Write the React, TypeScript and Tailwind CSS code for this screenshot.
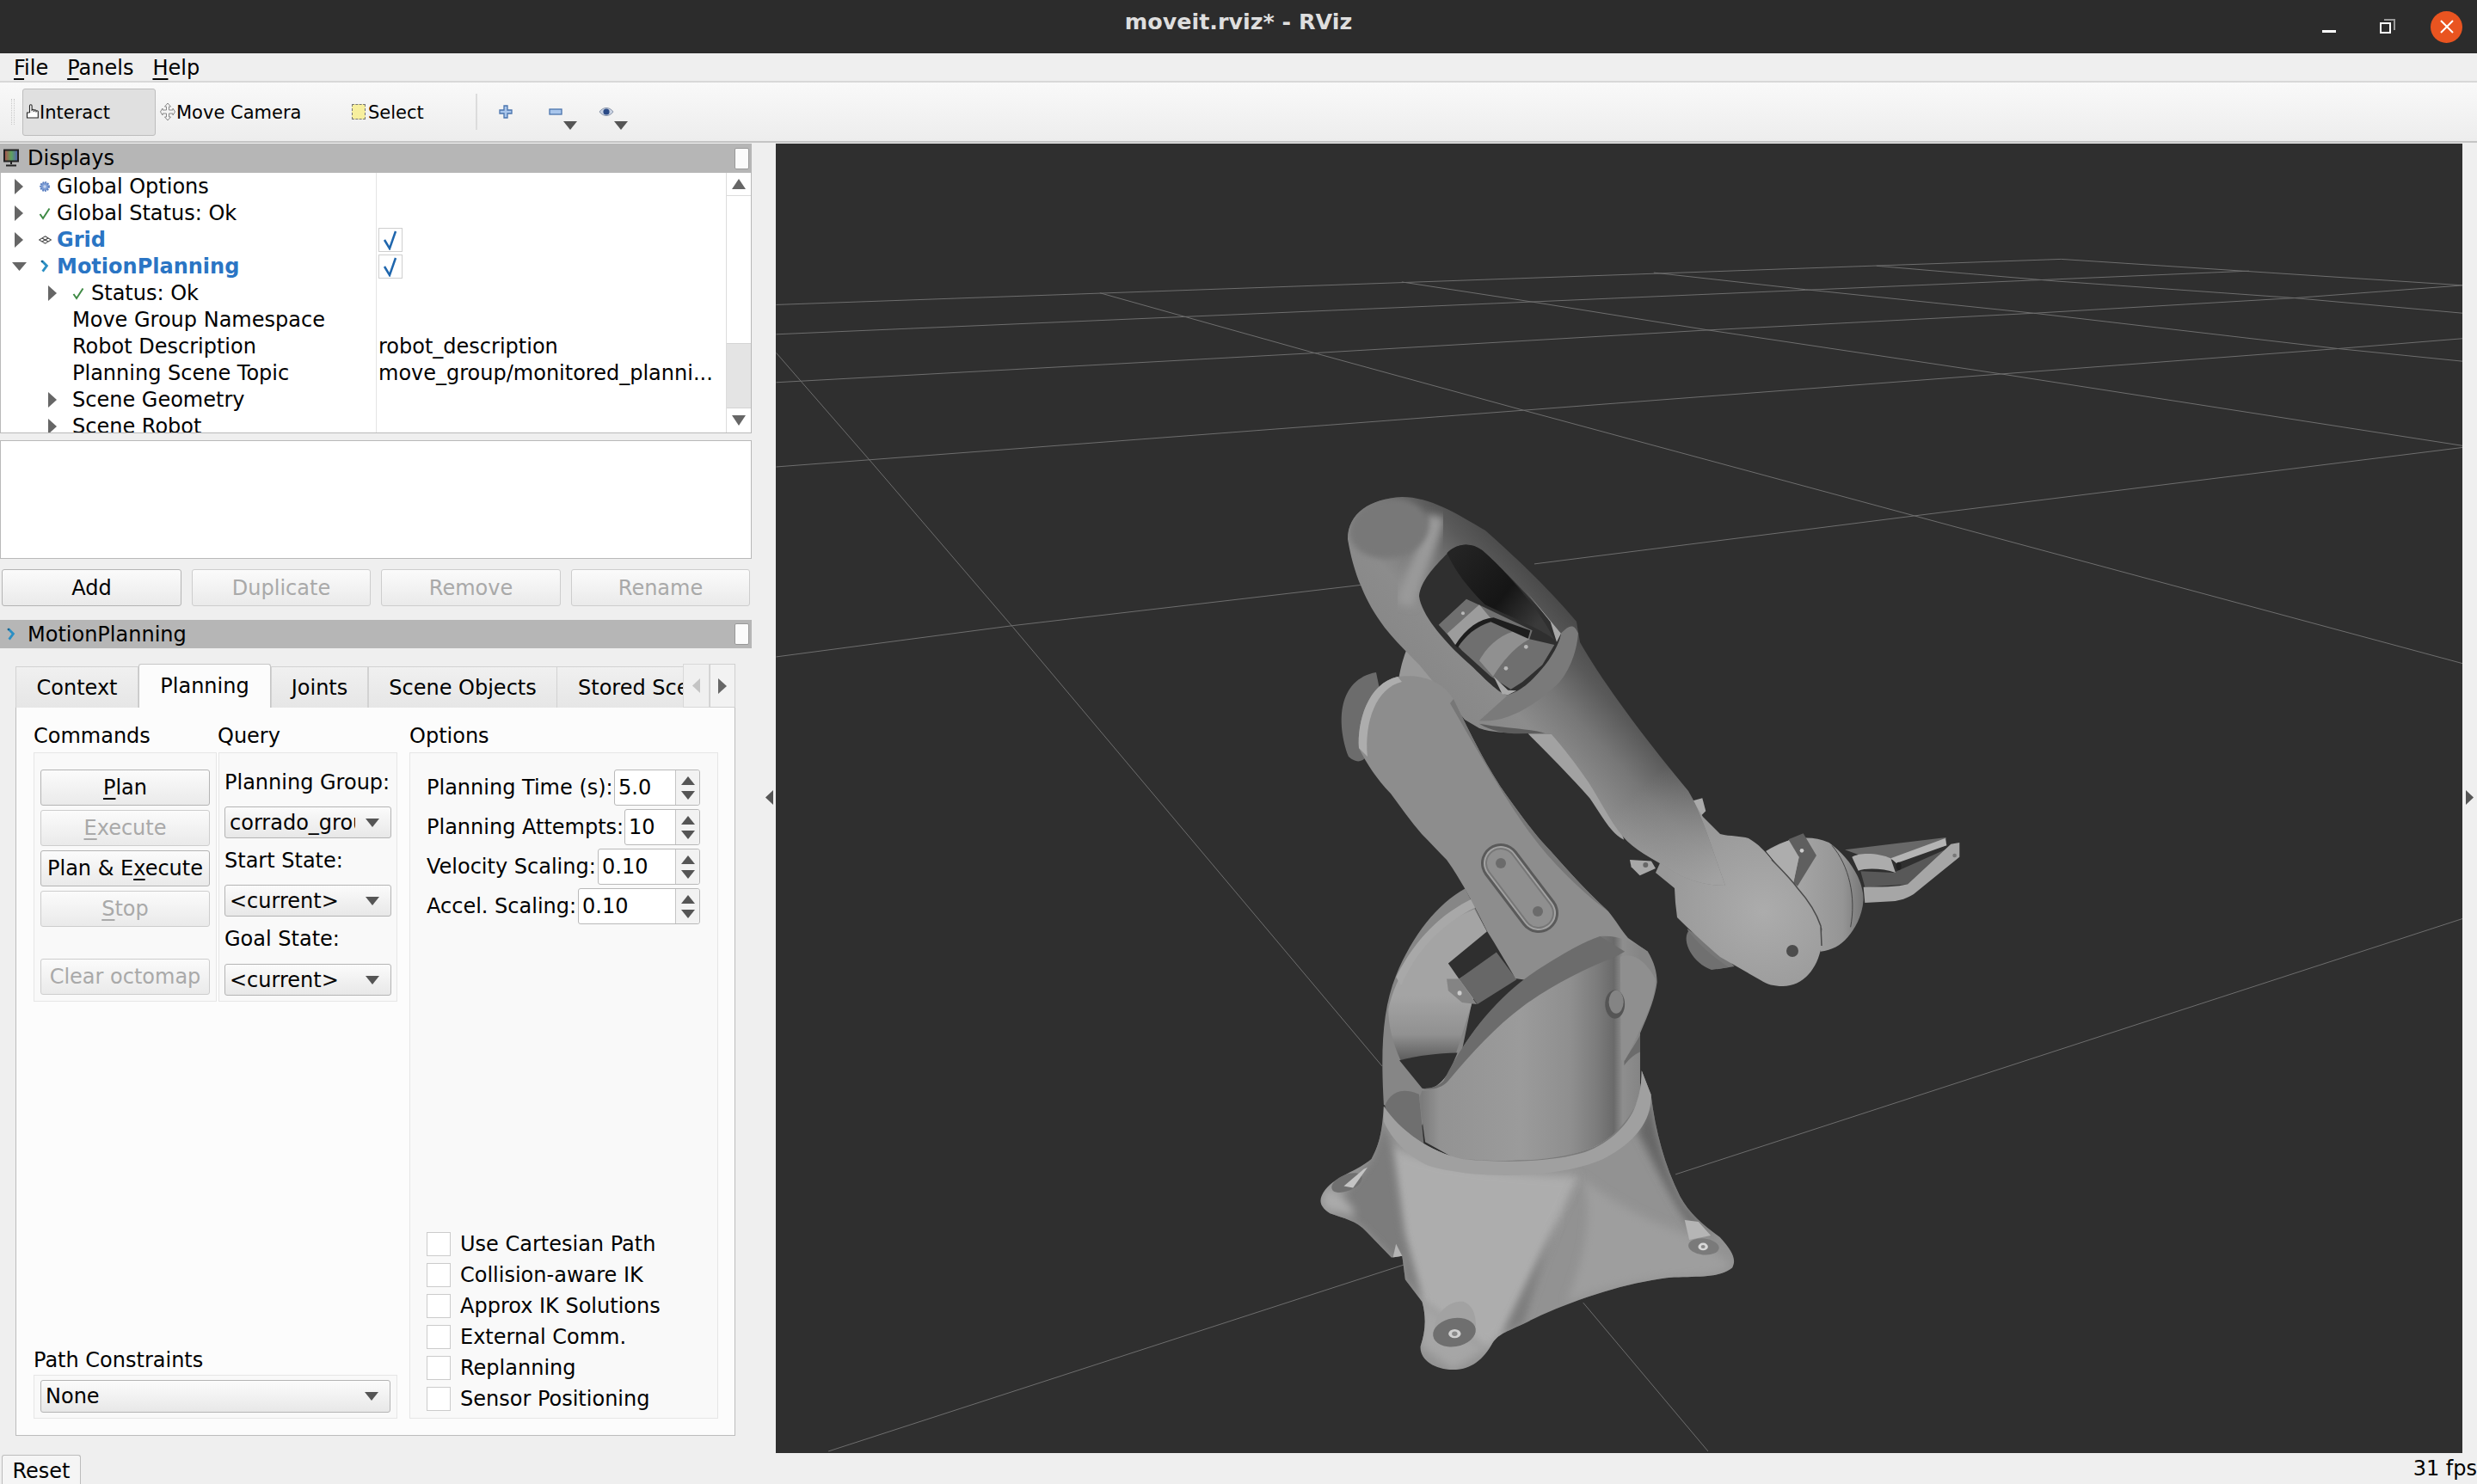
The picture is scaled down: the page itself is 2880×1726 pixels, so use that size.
import React from "react";

const FONT = "font-['DejaVu_Sans',sans-serif]";

function RightArrow() {
  return (
    <svg width="10" height="18" viewBox="0 0 10 18" className="block">
      <path d="M0 0L10 9L0 18Z" fill="#666" />
    </svg>
  );
}

function DownArrow() {
  return (
    <svg width="17" height="10" viewBox="0 0 17 10" className="block">
      <path d="M0 0H17L8.5 10Z" fill="#666" />
    </svg>
  );
}

function ComboArrow() {
  return (
    <svg width="16" height="10" viewBox="0 0 16 10" className="block shrink-0">
      <path d="M0 0H16L8 10Z" fill="#555" />
    </svg>
  );
}

function Check() {
  return (
    <svg width="16" height="16" viewBox="0 0 16 16" className="block">
      <path d="M2.5 9L6 14L13.5 2.5" fill="none" stroke="#3f8a45" strokeWidth="2" />
    </svg>
  );
}

function GearIcon() {
  return (
    <svg width="14" height="14" viewBox="0 0 16 16" className="block">
      <circle cx="8" cy="8" r="5.5" fill="#7f9fd6" stroke="#5b7fc0" strokeWidth="2.5" strokeDasharray="2 1.2" />
      <circle cx="8" cy="8" r="2" fill="#c8d6ef" />
    </svg>
  );
}

function GridIcon() {
  return (
    <svg width="15" height="10" viewBox="0 0 16 10" className="block">
      <path d="M8 .5L15.5 5L8 9.5L.5 5ZM4.2 2.8L11.8 7.2M11.8 2.8L4.2 7.2" fill="#fff" stroke="#444" strokeWidth="1.1" />
    </svg>
  );
}

function MotionIcon() {
  return (
    <svg width="12" height="16" viewBox="0 0 14 20" className="block">
      <path d="M3 2L10 9L4 17" fill="none" stroke="#2b8fc4" strokeWidth="3.5" />
      <circle cx="3" cy="2.5" r="1.5" fill="#16618f" />
    </svg>
  );
}

function MonitorIcon() {
  return (
    <svg width="20" height="22" viewBox="0 0 20 22" className="block">
      <defs>
        <linearGradient id="monitorFill" x1="0" x2="1" y1="0" y2="0">
          <stop offset="0" stopColor="#b24d4d" />
          <stop offset="0.5" stopColor="#5da35d" />
          <stop offset="1" stopColor="#5560b5" />
        </linearGradient>
      </defs>
      <rect x="2" y="1.5" width="16" height="13" fill="url(#monitorFill)" stroke="#222" strokeWidth="2" />
      <path d="M10 15V18M4 19.5H16" stroke="#222" strokeWidth="2" />
    </svg>
  );
}

function TreeRow({
  indent = 0,
  arrow,
  icon,
  label,
  value,
  blue,
  checked,
  textLeft,
}: {
  indent?: number;
  arrow?: "right" | "down";
  icon?: React.ReactNode;
  label: string;
  value?: string;
  blue?: boolean;
  checked?: boolean;
  textLeft: number;
}) {
  return (
    <div className="flex h-[31px] shrink-0 items-center">
      <div className="flex h-full w-[437px] shrink-0 items-center border-r border-[#e4e4e4]">
        <div className="relative flex h-full w-full items-center">
          <div className="flex w-[42px] shrink-0 items-center justify-center" style={{ marginLeft: indent }}>
            {arrow === "right" && <RightArrow />}
            {arrow === "down" && <DownArrow />}
          </div>
          {icon && <div className="flex w-[18px] shrink-0 items-center justify-center">{icon}</div>}
          <span
            className={blue ? "whitespace-nowrap font-bold text-[#2a75c4]" : "whitespace-nowrap text-black"}
            style={{ marginLeft: textLeft }}
          >
            {label}
          </span>
        </div>
      </div>
      <div className="flex h-full flex-1 items-center pl-[2px] whitespace-nowrap text-black">
        {checked ? (
          <div className="flex h-[28px] w-[28px] items-center justify-center border border-[#cfcfcf] bg-white">
            <svg width="20" height="24" viewBox="0 0 20 24">
              <path d="M3 12L9 22L16 2" fill="none" stroke="#1f66ad" strokeWidth="2.5" />
            </svg>
          </div>
        ) : (
          value
        )}
      </div>
    </div>
  );
}

function DockHeader({ icon, title, height }: { icon: React.ReactNode; title: string; height: string }) {
  return (
    <div className={`flex ${height} items-center justify-between bg-[#b6b6b6] pl-[3px] pr-[3px]`}>
      <div className="flex items-center">
        <div className="flex w-[20px] justify-center">{icon}</div>
        <span className="ml-[9px] text-black">{title}</span>
      </div>
      <div className="h-[25px] w-[17px] rounded-[2px] border border-[#999] bg-[#fbfbfb]" />
    </div>
  );
}

function ActionButton({ label, disabled, className }: { label: React.ReactNode; disabled?: boolean; className: string }) {
  return (
    <div
      className={`flex items-center justify-center whitespace-nowrap rounded-[3px] border bg-gradient-to-b from-[#fbfbfb] to-[#eaeaea] ${
        disabled ? "border-[#cdcdcd] text-[#a9a9a9]" : "border-[#b4b4b4] text-black"
      } ${className}`}
    >
      {label}
    </div>
  );
}

function Combo({ text, className, clip }: { text: string; className: string; clip?: boolean }) {
  return (
    <div
      className={`flex items-center rounded-[3px] border border-[#b4b4b4] bg-gradient-to-b from-[#fbfbfb] to-[#e8e8e8] pl-[5px] pr-[13px] ${className}`}
    >
      <div className="min-w-0 flex-1">
        <div className={`overflow-hidden whitespace-nowrap leading-[32px] text-black ${clip ? "w-[146px]" : ""}`}>{text}</div>
      </div>
      <ComboArrow />
    </div>
  );
}

function Spin({ label, value, width }: { label: string; value: string; width: string }) {
  return (
    <div className="flex h-[42px] items-center">
      <span className="min-w-0 flex-1 whitespace-nowrap text-black">{label}</span>
      <div className={`flex h-[42px] ${width} shrink-0 rounded-[3px] border border-[#b9b9b9] bg-white`}>
        <div className="flex-1 pl-[4px] leading-[40px] text-black">{value}</div>
        <div className="flex w-[28px] flex-col items-center justify-center gap-[7px] rounded-r-[3px] border-l border-[#c4c4c4] bg-[#f2f2f2]">
          <svg width="16" height="10" viewBox="0 0 16 10" className="block">
            <path d="M8 0L16 10H0Z" fill="#555" />
          </svg>
          <svg width="16" height="10" viewBox="0 0 16 10" className="block">
            <path d="M0 0H16L8 10Z" fill="#555" />
          </svg>
        </div>
      </div>
    </div>
  );
}

function CheckRow({ label }: { label: string }) {
  return (
    <div className="flex h-[28px] items-center">
      <div className="h-[28px] w-[28px] shrink-0 border border-[#cbcbcb] bg-white" />
      <span className="ml-[11px] whitespace-nowrap text-black">{label}</span>
    </div>
  );
}

function Tab({ label, active, width }: { label: string; active?: boolean; width: string }) {
  return (
    <div
      className={`flex shrink-0 items-center justify-center border border-b-0 ${width} ${
        active
          ? "h-[51px] rounded-t-[3px] border-[#c6c6c6] bg-[#fcfcfc]"
          : "h-[48px] border-[#d2d2d2] bg-gradient-to-b from-[#f0f0f0] to-[#e6e6e6]"
      } text-black`}
    >
      {label}
    </div>
  );
}

function GridLines() {
  const lines = [
    "2,198 1185,144 1555,175",
    "2,233 1358,158",
    "2,290 500,255 860,228 1160,208 1400,190 1555,175",
    "2,390 690,323 1130,280 1440,250 1555,238",
    "2,615 220,578 540,530",
    "700,505 1050,448 1555,367",
    "50,1556 580,1335",
    "830,1228 1555,925",
    "2,255 90,385 220,580 560,1100",
    "745,1380 860,1556",
    "300,184 500,256 690,323 1050,448 1555,623",
    "578,171 700,195 860,228 1130,280 1555,365",
    "810,160 950,180 1160,208 1440,250 1555,265",
    "1015,152 1180,170 1400,190 1555,208",
  ];
  return (
    <g transform="translate(900 160) scale(1.2628 0.982)">
      {lines.map((l) => (
        <polyline key={l} points={l} fill="none" stroke="#6e6e6e" strokeWidth="1" vectorEffect="non-scaling-stroke" />
      ))}
    </g>
  );
}

const SKIRT =
  "M305,725 C300,790 295,830 265,880 C220,915 150,930 115,970 C90,1000 95,1020 130,1040 C175,1055 215,1060 250,1095 L330,1170 L365,1165 L375,1235 L430,1300 C445,1350 440,1390 425,1430 C420,1470 470,1500 530,1500 C590,1500 630,1470 660,1420 C680,1395 700,1390 760,1365 C900,1300 1100,1240 1250,1228 C1330,1225 1400,1230 1440,1200 C1455,1175 1440,1150 1400,1110 C1340,1070 1300,1040 1270,990 C1220,900 1190,800 1175,690 L1145,620 C1145,720 1100,790 1000,840 C880,890 700,890 560,880 C460,860 360,800 305,725 Z";

const ARM =
  "M1567,627 C1567,597 1593,580 1630,578 C1663,578 1693,597 1727,617 C1753,640 1797,680 1833,723 L1837,747 C1863,793 1913,860 1963,920 C1978,945 1990,985 2006,1030 C1985,1030 1960,1024 1940,1010 C1920,998 1900,988 1887,973 C1872,955 1860,930 1847,910 C1832,888 1818,870 1803,853 L1767,853 C1750,852 1735,852 1720,847 L1703,837 C1685,815 1668,795 1650,773 C1635,758 1622,745 1610,730 C1597,712 1590,700 1583,683 C1575,665 1570,645 1567,627 Z";

function Robot() {
  return (
    <g>
      <defs>
        <linearGradient id="armTube" gradientUnits="userSpaceOnUse" x1="1640" y1="880" x2="1860" y2="680">
          <stop offset="0" stopColor="#6f6f6f" />
          <stop offset="0.25" stopColor="#888888" />
          <stop offset="0.42" stopColor="#8c8c8c" />
          <stop offset="0.58" stopColor="#777777" />
          <stop offset="0.72" stopColor="#5a5a5a" />
          <stop offset="0.88" stopColor="#444444" />
          <stop offset="1" stopColor="#353535" />
        </linearGradient>
        <linearGradient id="armFade" gradientUnits="userSpaceOnUse" x1="1905" y1="920" x2="2000" y2="1020">
          <stop offset="0" stopColor="#a2a2a2" stopOpacity="0" />
          <stop offset="1" stopColor="#a2a2a2" stopOpacity="1" />
        </linearGradient>
        <radialGradient id="elbowFill" gradientUnits="userSpaceOnUse" cx="2050" cy="1060" r="120">
          <stop offset="0" stopColor="#acacac" />
          <stop offset="1" stopColor="#989898" />
        </radialGradient>
        <linearGradient id="shellFill" gradientUnits="userSpaceOnUse" x1="430" y1="0" x2="1140" y2="0">
          <stop offset="0" stopColor="#7c7c7c" />
          <stop offset="0.08" stopColor="#939393" />
          <stop offset="0.45" stopColor="#9b9b9b" />
          <stop offset="0.68" stopColor="#8f8f8f" />
          <stop offset="0.8" stopColor="#7c7c7c" />
          <stop offset="0.88" stopColor="#6a6a6a" />
          <stop offset="0.92" stopColor="#8e8e8e" />
          <stop offset="1" stopColor="#858585" />
        </linearGradient>
        <linearGradient id="innerWall" gradientUnits="userSpaceOnUse" x1="0" y1="400" x2="0" y2="590">
          <stop offset="0" stopColor="#a4a4a4" />
          <stop offset="0.6" stopColor="#919191" />
          <stop offset="1" stopColor="#5c5c5c" />
        </linearGradient>
        <linearGradient id="windowDark" gradientUnits="userSpaceOnUse" x1="500" y1="260" x2="800" y2="500">
          <stop offset="0" stopColor="#242424" />
          <stop offset="0.6" stopColor="#151515" />
          <stop offset="1" stopColor="#3a3a3a" />
        </linearGradient>
        <linearGradient id="wristFill" gradientUnits="userSpaceOnUse" x1="560" y1="0" x2="800" y2="0">
          <stop offset="0" stopColor="#a6a6a6" />
          <stop offset="0.7" stopColor="#959595" />
          <stop offset="1" stopColor="#777" />
        </linearGradient>
        <filter id="soft" x="-20%" y="-20%" width="140%" height="140%">
          <feGaussianBlur stdDeviation="14" />
        </filter>
        <filter id="softArm" x="-30%" y="-30%" width="160%" height="160%">
          <feGaussianBlur stdDeviation="9" />
        </filter>
        <clipPath id="skirtClip">
          <path d={SKIRT} />
        </clipPath>
        <clipPath id="armClip">
          <path d={ARM} />
        </clipPath>
      </defs>

      {/* screw tabs and crescent behind the forearm */}
      <g transform="translate(1520 560) scale(0.3333)">
        <path d="M320,680 C330,630 340,600 350,580 L400,640 L470,700 L400,700 Z" fill="#999" />
        <path d="M770,880 L860,880 C940,950 1040,1060 1105,1250 C1060,1230 1030,1170 985,1105 C920,1030 840,950 770,880 Z" fill="#a2a2a2" />
        <path d="M1340,1115 L1378,1105 L1390,1150 L1370,1170 Z" fill="#aaa" />
        <path d="M1125,1320 L1200,1325 L1215,1350 L1160,1375 L1130,1345 Z" fill="#a8a8a8" />
        <circle cx="1180" cy="1338" r="9" fill="#666" />
      </g>

      {/* wrist and gripper */}
      <g transform="translate(1900 900) scale(0.3333)">
        <path d="M185,540 C210,600 240,660 290,682 L350,672 L300,620 Z" fill="#777" />
        <path d="M735,265 L1088,222 L1090,250 L900,300 L790,285 Z" fill="#686868" />
        <path d="M790,340 L905,345 L1118,250 L1120,290 L965,385 L805,395 Z" fill="#585858" />
        <path d="M800,395 C860,395 920,395 955,385 L1105,245 L1135,240 L1135,290 L975,420 C950,435 930,442 900,445 L805,450 Z" fill="#a6a6a6" />
        <path d="M760,290 C790,272 860,278 895,295 L912,345 C870,330 810,328 782,338 Z" fill="#acacac" />
        <path d="M895,295 L1085,225 L1090,250 L915,312 Z" fill="#b4b4b4" />
        <ellipse cx="923" cy="322" rx="9" ry="14" fill="#222" />
        <circle cx="1118" cy="285" r="7" fill="#777" />
        <path d="M460,270 C520,230 600,205 680,240 C750,290 800,370 800,440 C795,500 770,540 745,570 C720,600 690,615 650,620 L655,540 L560,395 Z" fill="url(#wristFill)" />
        <path d="M540,228 L590,208 L636,285 L570,392 L555,380 L575,290 L540,265 Z" fill="#5f5f5f" />
        <path d="M460,270 L540,232 L575,290 L556,380 Z" fill="#adadad" />
        <circle cx="585" cy="268" r="7" fill="#ccc" />
        <path d="M690,250 C750,320 775,430 755,535" fill="none" stroke="#444" strokeWidth="3" />
      </g>

      {/* forearm and elbow */}
      <path d="M1963,1083 C1955,1095 1968,1120 1990,1128 L2010,1125 C1990,1112 1975,1098 1963,1083 Z" fill="#707070" />
      <path d="M1947,1033 L1925,1015 L1965,925 L1980,950 L2000,970 C2012,973 2024,972 2033,975 C2045,982 2052,990 2060,1000 C2072,1012 2082,1022 2090,1033 C2105,1050 2112,1062 2117,1077 L2118,1100 C2115,1115 2110,1125 2103,1133 C2095,1142 2084,1147 2073,1147 C2062,1147 2055,1145 2047,1140 L2000,1113 C1985,1100 1965,1082 1950,1067 L1948,1050 Z" fill="url(#elbowFill)" />
      <path d="M2060,1000 C2072,1012 2082,1022 2090,1033 C2105,1050 2112,1062 2117,1077 L2118,1100" fill="none" stroke="#4a4a4a" strokeWidth="1.5" />
      <path d={ARM} fill="url(#armTube)" />
      <path d={ARM} fill="url(#armFade)" />
      <circle cx="2084" cy="1106" r="7" fill="#4c4c4c" />
      <g clipPath="url(#armClip)">
        <g transform="translate(1520 560) scale(0.3333)">
          <path d="M450,120 C430,220 370,320 340,430" fill="none" stroke="#9a9a9a" strokeWidth="60" filter="url(#soft)" />
          <ellipse cx="285" cy="165" rx="140" ry="102" transform="rotate(-10 285 165)" fill="#787878" filter="url(#softArm)" />
        </g>
      </g>
      <g transform="translate(1520 560) scale(0.3333)">
        <path d="M885,530 C880,560 860,600 830,640 C790,690 750,730 700,745 L600,835 C700,845 810,770 880,700 C920,650 940,590 945,530 C930,495 915,500 885,530 Z" fill="#7a7a7a" />
        <path d="M600,845 C680,860 760,860 830,878 L740,880 C690,880 640,870 600,845 Z" fill="#5c5c5c" />
        <path d="M390,400 C395,350 440,300 490,250 C520,215 570,210 610,240 C680,300 800,430 885,530 C880,560 860,600 830,640 C790,690 750,730 700,745 C680,745 640,710 580,650 C510,590 400,480 390,400 Z" fill="#2f2f2f" />
        <path d="M487,250 C520,215 570,210 610,240 C680,300 800,430 862,552 C810,510 700,470 620,430 C560,370 520,320 487,250 Z" fill="url(#windowDark)" />
        <path d="M458,500 L555,410 L620,440 L785,520 L775,550 L862,570 L820,640 L750,700 L710,725 L640,680 L540,590 Z" fill="#6f6f6f" />
        <path d="M600,625 C630,570 680,530 735,520 L775,550 C720,580 680,630 648,680 Z" fill="#909090" />
        <path d="M488,530 L600,430 L640,478 C590,490 550,530 520,575 Z" fill="#9c9c9c" />
        <path d="M515,572 C555,510 600,480 650,475 L778,520 L770,548 L640,490 C590,505 550,540 525,580 Z" fill="#1d1d1d" />
        <path d="M650,680 L700,728 L730,730 L700,745 L680,742 Z" fill="#aaa" />
        <path d="M760,380 L885,530 L870,560 L848,490 Z" fill="#a8a8a8" />
        <circle cx="543" cy="460" r="6" fill="#b9b9b9" />
        <circle cx="763" cy="577" r="7" fill="#b9b9b9" />
        <circle cx="693" cy="652" r="7" fill="#b9b9b9" />
      </g>

      {/* back of the yoke, servo, then upper link */}
      <g transform="translate(1500 1000) scale(0.357 0.3954)">
        <path d="M305,720 C295,560 300,440 345,340 C400,220 480,130 570,85 L640,210 L560,560 L480,680 L420,800 Z" fill="#868686" />
        <path d="M320,440 C340,350 420,210 600,145 L640,210 L600,400 L540,570 L360,590 C335,540 320,490 320,440 Z" fill="url(#innerWall)" />
        <path d="M345,345 C410,230 490,160 598,112 L605,140 C490,190 410,270 362,370 Z" fill="#a8a8a8" />
        <path d="M356,590 C420,575 480,570 545,568 L520,620 C500,650 470,680 430,672 Z" fill="#2f2f2f" />
        <path d="M515,305 L640,212 L680,280 L550,350 Z" fill="#2f2f2f" />
        <path d="M550,350 L672,272 L738,352 L610,425 Z" fill="#676767" />
        <path d="M510,350 L550,350 L608,425 L560,420 L515,385 Z" fill="#848484" />
        <circle cx="552" cy="392" r="7" fill="#ccc" />
      </g>

      <path d="M1600,782 C1556,790 1553,840 1568,880 C1590,900 1600,860 1610,830 Z" fill="#6c6c6c" />
      <path d="M1580,870 C1578,840 1590,795 1625,787 C1650,784 1675,790 1690,813 C1710,855 1730,895 1753,927 C1770,950 1785,972 1803,990 C1825,1015 1848,1040 1870,1060 C1880,1072 1885,1082 1893,1091 L1916,1107 L1900,1160 L1762,1138 C1750,1118 1740,1100 1729,1083 C1715,1055 1700,1025 1682,1000 C1672,990 1663,980 1653,970 C1640,955 1628,938 1617,923 C1600,905 1590,890 1580,870 Z" fill="#8d8d8d" />
      <path d="M1580,870 C1578,840 1590,795 1625,787 L1630,793 C1600,800 1586,840 1590,880 Z" fill="#adadad" />
      <path d="M1690,813 C1710,855 1730,895 1753,927 C1770,950 1785,972 1803,990 C1825,1015 1848,1040 1870,1060 C1845,1042 1820,1018 1798,993 C1775,966 1750,930 1686,818 Z" fill="#777" />
      <line x1="1745" y1="1004" x2="1789" y2="1062" stroke="#5a5a5a" strokeWidth="46" strokeLinecap="round" />
      <line x1="1745" y1="1004" x2="1789" y2="1062" stroke="#a2a2a2" strokeWidth="40" strokeLinecap="round" />
      <line x1="1745" y1="1004" x2="1789" y2="1062" stroke="#777" strokeWidth="36" strokeLinecap="round" />
      <line x1="1745" y1="1004" x2="1789" y2="1062" stroke="#8f8f8f" strokeWidth="32" strokeLinecap="round" />
      <circle cx="1745" cy="1004" r="6" fill="#6b6b6b" />
      <circle cx="1788" cy="1060" r="6" fill="#6b6b6b" />

      {/* front shell and base */}
      <g transform="translate(1500 1000) scale(0.357 0.3954)">
        <path d="M310,720 C330,680 370,670 420,690 L440,880 C380,860 320,810 305,770 Z" fill="#6f6f6f" />
        <path d="M430,680 C470,680 500,650 520,620 C600,480 700,390 830,310 C900,270 960,240 1010,225 C1060,220 1120,240 1165,270 C1185,300 1195,330 1195,360 C1190,400 1170,450 1140,510 L1140,720 C1100,790 1000,860 900,880 L560,890 L440,830 L420,700 Z" fill="url(#shellFill)" />
        <path d="M500,650 C600,470 720,370 830,310 C900,270 960,240 1010,225 L1090,270 L1060,285 C960,320 850,370 760,430 C670,490 590,570 520,645 C505,665 470,680 440,672 C470,672 490,660 500,650 Z" fill="#6c6c6c" />
        <path d="M1088,592 C1110,560 1125,540 1140,515 L1140,565 C1115,575 1100,590 1088,605 Z" fill="#6b6b6b" />
        <path d="M1075,285 C1120,270 1160,300 1190,350 C1190,400 1170,450 1090,590 L1078,590 Z" fill="#8f8f8f" />
        <ellipse cx="1058" cy="425" rx="32" ry="42" fill="#555" />
        <ellipse cx="1062" cy="418" rx="24" ry="34" fill="#848484" />

        <path d={SKIRT} fill="#929292" />
        <g clipPath="url(#skirtClip)">
          <path d="M330,840 C450,900 700,920 940,930 C880,1050 800,1200 690,1400 L640,1440 L430,1300 L370,1100 Z" fill="#adadad" filter="url(#soft)" />
          <path d="M940,930 C1040,1000 1150,1060 1290,1100 L1440,1190 C1400,1228 1330,1225 1250,1228 C1100,1240 1000,1270 900,1300 C960,1180 1000,1000 940,930 Z" fill="#9e9e9e" filter="url(#soft)" />
          <path d="M760,1365 C800,1240 860,1070 940,930 C880,1050 800,1200 690,1400 Z" fill="#7c7c7c" filter="url(#soft)" />
          <path d="M1175,690 C1190,800 1220,900 1270,990 C1300,1040 1340,1070 1400,1110 L1300,1070 C1240,1000 1180,880 1130,800 Z" fill="#666" filter="url(#soft)" />
          <path d="M305,770 L330,840 L370,1100 L430,1300 L375,1235 L365,1165 L330,1170 L250,1095 C215,1060 175,1055 130,1040 L265,880 Z" fill="#7b7b7b" filter="url(#soft)" />
          <path d="M120,1030 C100,1005 100,985 125,965 C170,985 200,1010 215,1050 C180,1045 150,1040 120,1030 Z" fill="#aaaaaa" filter="url(#soft)" />
          <path d="M430,1300 L640,1440 L530,1500 L425,1430 Z" fill="#a6a6a6" filter="url(#soft)" />
        </g>
        <path d="M305,725 C360,800 460,860 560,880 C700,890 880,890 1000,840 C1100,790 1145,720 1145,620 L1175,690 C1180,760 1130,830 1020,880 C880,935 620,945 450,900 C380,870 330,820 305,770 Z" fill="#a0a0a0" />
        <path d="M560,880 C700,890 880,890 1000,840 C1060,810 1110,760 1130,710 C1110,775 1040,835 960,860 C850,890 700,892 560,880 Z" fill="#7a7a7a" />
        <ellipse cx="185" cy="950" rx="52" ry="24" fill="#707070" transform="rotate(-20 185 950)" />
        <path d="M175,960 L240,910 L252,905 L205,965 Z" fill="#c4c4c4" />
        <path d="M335,1170 L345,1130 L365,1165 Z" fill="#b5b5b5" />
        <path d="M470,1375 C480,1320 530,1295 565,1300 C595,1310 605,1340 605,1370 L540,1420 Z" fill="#a2a2a2" />
        <ellipse cx="535" cy="1390" rx="70" ry="42" fill="#6f6f6f" transform="rotate(-8 535 1390)" />
        <ellipse cx="536" cy="1394" rx="20" ry="13" fill="#d0d0d0" />
        <ellipse cx="536" cy="1394" rx="9" ry="7" fill="#8a8a8a" />
        <path d="M1285,1060 L1330,1065 L1370,1105 L1300,1118 Z" fill="#b5b5b5" />
        <ellipse cx="1347" cy="1138" rx="50" ry="24" fill="#7a7a7a" transform="rotate(5 1347 1138)" />
        <ellipse cx="1345" cy="1138" rx="16" ry="11" fill="#d8d8d8" />
        <ellipse cx="1345" cy="1138" rx="7" ry="5" fill="#8a8a8a" />
      </g>
    </g>
  );
}

export default function App() {
  return (
    <div className={`flex h-[1726px] w-[2880px] flex-col overflow-hidden bg-[#efefef] text-[24px] leading-none ${FONT}`}>
      {/* window title */}
      <div className="flex h-[62px] shrink-0 items-center bg-[#2c2c2c]">
        <div className="flex-1" />
        <div className="mb-[10px] text-[25.4px] font-bold text-[#dedede]">moveit.rviz* - RViz</div>
        <div className="flex flex-1 items-center justify-end">
          <div className="mt-[10px] h-[3px] w-[16px] bg-white" />
          <svg width="18" height="18" viewBox="0 0 18 18" className="ml-[51px] block">
            <path d="M5 1H17V13" fill="none" stroke="#999" strokeWidth="2" />
            <rect x="1" y="5" width="11" height="11" fill="none" stroke="#fff" strokeWidth="2" />
          </svg>
          <div className="ml-[41px] mr-[17px] flex h-[37px] w-[37px] items-center justify-center rounded-full bg-[#e95420]">
            <svg width="16" height="16" viewBox="0 0 16 16" className="block">
              <path d="M1 1L15 15M15 1L1 15" stroke="#fff" strokeWidth="2" />
            </svg>
          </div>
        </div>
      </div>

      {/* menu bar */}
      <div className="flex h-[34px] shrink-0 items-center gap-[22px] border-b-2 border-[#d8d8d8] bg-[#efefef] pl-[16px] pt-[1px] text-black">
        <span><span className="underline decoration-2 underline-offset-4">F</span>ile</span>
        <span><span className="underline decoration-2 underline-offset-4">P</span>anels</span>
        <span><span className="underline decoration-2 underline-offset-4">H</span>elp</span>
      </div>

      {/* toolbar */}
      <div className="flex h-[70px] shrink-0 items-center border-b-2 border-[#c4c4c4] bg-gradient-to-b from-[#f9f9f9] to-[#ededed] pl-[13px] text-[21px] text-black">
        <div className="h-[30px] w-[4px] border-x border-dotted border-[#c8c8c8]" />
        <div className="ml-[9px] flex h-[55px] w-[155px] items-center rounded-[3px] border border-[#bdbdbd] bg-[#e0e0e0] pl-[3px]">
          <svg width="16" height="20" viewBox="0 0 16 20" className="block">
            <path d="M4.5 11V3a1.3 1.3 0 0 1 2.6 0V9M7.1 8.5a1.2 1.2 0 0 1 2.4 0V10M9.5 9a1.2 1.2 0 0 1 2.4 0V10.5M11.9 10a1.2 1.2 0 0 1 2.4 0V17H1.5V11H4.5" fill="#fff" stroke="#222" strokeWidth="1.1" />
          </svg>
          <span className="mt-[2px]">Interact</span>
        </div>
        <svg width="18" height="22" viewBox="0 0 18 22" className="ml-[5px] block">
          <path d="M9 1L12.5 5H10.5V9H15V7L17.5 11L15 15V13H10.5V17H12.5L9 21L5.5 17H7.5V13H3V15L.5 11L3 7V9H7.5V5H5.5Z" fill="#f4f4f4" stroke="#888" strokeWidth="1" />
        </svg>
        <span className="ml-[1px] mt-[2px] w-[204px]">Move Camera</span>
        <div className="h-[18px] w-[16px] border border-dashed border-[#777] bg-[#f7ef9e]" />
        <span className="ml-[3px] mt-[2px]">Select</span>
        <div className="ml-[60px] h-[42px] w-[2px] bg-[#dcdcdc]" />
        <svg width="16" height="16" viewBox="0 0 16 16" className="ml-[25px] block">
          <path d="M6 1H10V6H15V10H10V15H6V10H1V6H6Z" fill="#a9c6ec" stroke="#4a74ad" strokeWidth="1.3" />
        </svg>
        <svg width="16" height="8" viewBox="0 0 16 8" className="ml-[42px] block">
          <rect x="1" y="1" width="14" height="6" fill="#a9c6ec" stroke="#4a74ad" strokeWidth="1.3" />
        </svg>
        <div className="ml-[1px] mt-[32px]"><ComboArrow /></div>
        <svg width="18" height="14" viewBox="0 0 18 14" className="ml-[25px] block">
          <path d="M1 7C5 1 13 1 17 7C13 13 5 13 1 7Z" fill="#c9d2e2" stroke="#8c97ab" strokeWidth="1" />
          <circle cx="9" cy="7" r="3.6" fill="#2a4a86" />
        </svg>
        <div className="ml-[0px] mt-[32px]"><ComboArrow /></div>
      </div>

      <div className="flex min-h-0 flex-1">
        {/* left docks */}
        <div className="flex w-[902px] shrink-0">
          <div className="flex w-[874px] shrink-0 flex-col pt-[1px]">
            <DockHeader height="h-[34px]" title="Displays" icon={<MonitorIcon />} />

            <div className="flex h-[303px] shrink-0 overflow-hidden border border-t-0 border-[#b9b9b9] bg-white">
              <div className="flex min-w-0 flex-1 flex-col">
                <TreeRow arrow="right" icon={<GearIcon />} label="Global Options" textLeft={5} />
                <TreeRow arrow="right" icon={<Check />} label="Global Status: Ok" textLeft={5} />
                <TreeRow arrow="right" icon={<GridIcon />} label="Grid" textLeft={5} blue checked />
                <TreeRow arrow="down" icon={<MotionIcon />} label="MotionPlanning" textLeft={5} blue checked />
                <TreeRow indent={39} arrow="right" icon={<Check />} label="Status: Ok" textLeft={6} />
                <TreeRow indent={0} label="Move Group Namespace" textLeft={41} />
                <TreeRow indent={0} label="Robot Description" value="robot_description" textLeft={41} />
                <TreeRow indent={0} label="Planning Scene Topic" value="move_group/monitored_planni..." textLeft={41} />
                <TreeRow indent={39} arrow="right" label="Scene Geometry" textLeft={2} />
                <TreeRow indent={39} arrow="right" label="Scene Robot" textLeft={2} />
              </div>
              <div className="flex w-[29px] shrink-0 flex-col border-l border-[#dcdcdc] bg-white">
                <div className="flex h-[27px] shrink-0 items-center justify-center border-b border-[#dcdcdc]">
                  <svg width="16" height="12" viewBox="0 0 16 12" className="block">
                    <path d="M8 0L16 12H0Z" fill="#666" />
                  </svg>
                </div>
                <div className="flex-1" />
                <div className="h-[76px] shrink-0 border-y border-[#d4d4d4] bg-[#e4e4e4]" />
                <div className="flex h-[28px] shrink-0 items-center justify-center">
                  <svg width="16" height="12" viewBox="0 0 16 12" className="block">
                    <path d="M0 0H16L8 12Z" fill="#666" />
                  </svg>
                </div>
              </div>
            </div>

            <div className="mt-[8px] h-[138px] shrink-0 border border-[#b9b9b9] bg-white" />

            <div className="mt-[12px] flex h-[43px] shrink-0 gap-[12px] px-[2px]">
              <ActionButton label="Add" className="w-[209px]" />
              <ActionButton label="Duplicate" disabled className="w-[208px]" />
              <ActionButton label="Remove" disabled className="w-[209px]" />
              <ActionButton label="Rename" disabled className="w-[208px]" />
            </div>

            <div className="mt-[16px]">
              <DockHeader height="h-[33px]" title="MotionPlanning" icon={<MotionIcon />} />
            </div>

            {/* tabs */}
            <div className="ml-[18px] mt-[18px] flex h-[51px] w-[837px] shrink-0 items-end">
              <div className="flex min-w-0 flex-1 items-end overflow-hidden">
                <Tab label="Context" width="w-[143px]" />
                <Tab label="Planning" active width="w-[154px]" />
                <Tab label="Joints" width="w-[113px]" />
                <Tab label="Scene Objects" width="w-[220px]" />
                <div className="flex h-[48px] w-[200px] shrink-0 items-center border-t border-[#d2d2d2] bg-gradient-to-b from-[#f0f0f0] to-[#e6e6e6] pl-[24px] text-black">
                  Stored Scenes
                </div>
              </div>
              <div className="flex h-[51px] w-[31px] shrink-0 items-center justify-center border border-[#d8d8d8] bg-[#f0f0f0]">
                <svg width="9" height="17" viewBox="0 0 9 17" className="block">
                  <path d="M9 0V17L0 8.5Z" fill="#c4c4c4" />
                </svg>
              </div>
              <div className="flex h-[51px] w-[30px] shrink-0 items-center justify-center border border-[#d0d0d0] bg-[#f2f2f2]">
                <RightArrow />
              </div>
            </div>

            {/* planning tab */}
            <div className="ml-[18px] flex h-[847px] w-[837px] shrink-0 border border-t-0 border-[#bcbcbc] bg-[#fcfcfc] pb-[19px] pl-[20px] pr-[19px] pt-[17px]">
              <div className="flex w-[423px] shrink-0 flex-col">
                <div className="flex h-[325px] shrink-0 gap-[2px]">
                  <div className="flex w-[213px] flex-col">
                    <div className="h-[35px] shrink-0 leading-[32px] text-black">Commands</div>
                    <div className="flex h-[290px] flex-col border border-[#e6e6e6] bg-[#f9f9f9] px-[7px] pt-[19px]">
                      <ActionButton label={<span><span className="underline underline-offset-4">P</span>lan</span>} className="h-[42px] shrink-0" />
                      <ActionButton label={<span><span className="underline underline-offset-4">E</span>xecute</span>} disabled className="mt-[5px] h-[42px] shrink-0" />
                      <ActionButton label={<span>Plan &amp; E<span className="underline underline-offset-4">x</span>ecute</span>} className="mt-[5px] h-[42px] shrink-0" />
                      <ActionButton label={<span><span className="underline underline-offset-4">S</span>top</span>} disabled className="mt-[5px] h-[42px] shrink-0" />
                      <ActionButton label="Clear octomap" disabled className="mt-[37px] h-[42px] shrink-0" />
                    </div>
                  </div>
                  <div className="flex w-[208px] flex-col">
                    <div className="-ml-[1px] h-[35px] shrink-0 leading-[32px] text-black">Query</div>
                    <div className="flex h-[290px] flex-col border border-[#e6e6e6] bg-[#f9f9f9] px-[6px] pt-[20px] text-black">
                      <div className="h-[42px] shrink-0 leading-[28px]">Planning Group:</div>
                      <Combo text="corrado_group" clip className="h-[37px] shrink-0" />
                      <div className="mt-[14px] h-[40px] shrink-0 leading-[24px]">Start State:</div>
                      <Combo text="<current>" className="h-[37px] shrink-0" />
                      <div className="mt-[14px] h-[41px] shrink-0 leading-[24px]">Goal State:</div>
                      <Combo text="<current>" className="h-[37px] shrink-0" />
                    </div>
                  </div>
                </div>
                <div className="flex-1" />
                <div className="h-[35px] shrink-0 leading-[36px] text-black">Path Constraints</div>
                <div className="h-[51px] shrink-0 border border-[#e6e6e6] bg-[#f9f9f9] px-[7px] pt-[5px]">
                  <Combo text="None" className="h-[38px]" />
                </div>
              </div>
              <div className="ml-[14px] flex w-[359px] shrink-0 flex-col">
                <div className="h-[35px] shrink-0 leading-[32px] text-black">Options</div>
                <div className="flex flex-1 flex-col border border-[#e6e6e6] bg-[#f9f9f9] pb-[8px] pl-[19px] pr-[20px] pt-[19px]">
                  <div className="flex flex-col gap-[4px]">
                    <Spin label="Planning Time (s):" value="5.0" width="w-[100px]" />
                    <Spin label="Planning Attempts:" value="10" width="w-[88px]" />
                    <Spin label="Velocity Scaling:" value="0.10" width="w-[119px]" />
                    <Spin label="Accel. Scaling:" value="0.10" width="w-[142px]" />
                  </div>
                  <div className="flex-1" />
                  <div className="flex flex-col gap-[8px]">
                    <CheckRow label="Use Cartesian Path" />
                    <CheckRow label="Collision-aware IK" />
                    <CheckRow label="Approx IK Solutions" />
                    <CheckRow label="External Comm." />
                    <CheckRow label="Replanning" />
                    <CheckRow label="Sensor Positioning" />
                  </div>
                </div>
              </div>
            </div>
          </div>
          <div className="flex flex-1 items-center justify-end pr-[3px]">
            <svg width="9" height="17" viewBox="0 0 9 17" className="block">
              <path d="M9 0V17L0 8.5Z" fill="#555" />
            </svg>
          </div>
        </div>

        {/* 3D view */}
        <div className="mt-[1px] h-[1523px] w-[1961px] shrink-0 bg-[#2f2f2f]">
          <svg viewBox="902 167 1961 1523" className="block h-full w-full">
            <GridLines />
            <Robot />
          </svg>
        </div>
        <div className="flex flex-1 items-center justify-center">
          <svg width="9" height="17" viewBox="0 0 9 17" className="block">
            <path d="M0 0V17L9 8.5Z" fill="#555" />
          </svg>
        </div>
      </div>

      {/* status bar */}
      <div className="flex h-[37px] shrink-0 items-end justify-between text-black">
        <div className="ml-[2px] flex h-[34px] w-[92px] items-center justify-center rounded-t-[3px] border border-b-0 border-[#bcbcbc] bg-[#f5f5f5] pt-[2px]">Reset</div>
        <div className="h-[30px]">31 fps</div>
      </div>
    </div>
  );
}
